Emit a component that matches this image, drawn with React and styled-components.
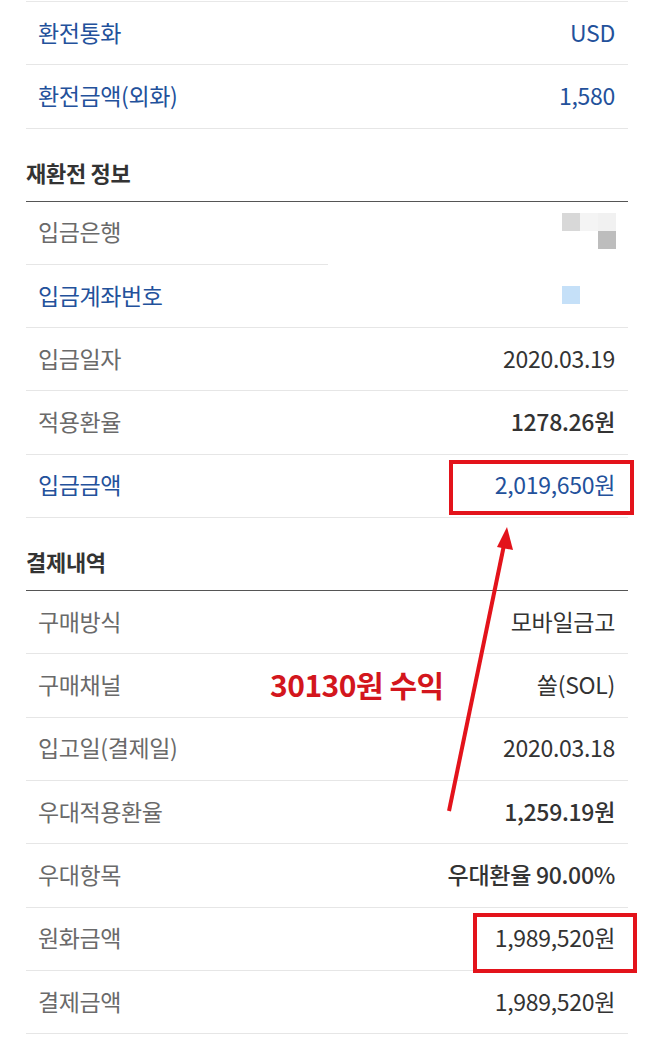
import styled, { createGlobalStyle } from 'styled-components'

const Global = createGlobalStyle`
  body {
    margin: 0;
    background: #fff;
    font-family: "Noto Sans CJK KR", "Noto Sans", sans-serif;
  }
`

const Page = styled.div`
  position: relative;
  width: 652px;
  height: 1045px;
  padding: 1px 24px 0 26px;
  box-sizing: border-box;
  overflow: hidden;
`

const List = styled.div`
  display: flex;
  flex-direction: column;
  border-top: ${p => (p.$top ? '1px solid #e8e8e8' : 'none')};
`

const Title = styled.h3`
  margin: 0;
  padding: 28px 0 14px;
  font-size: 22px;
  line-height: 30px;
  font-weight: 700;
  color: #333;
  border-bottom: 1.5px solid #555;
  letter-spacing: -0.3px;
`

const Row = styled.div`
  position: relative;
  height: 63.3px;
  box-sizing: border-box;
  display: flex;
  align-items: center;
  justify-content: space-between;
  padding: 0 13px 4px 12px;
  &::after {
    content: '';
    position: absolute;
    left: 0;
    bottom: 0;
    height: 1px;
    width: ${p => (p.$short ? '302px' : '100%')};
    background: #e6e6e6;
  }
`

const Label = styled.span`
  font-size: 23px;
  line-height: 30px;
  color: ${p => (p.$blue ? '#23519b' : '#6a6a6a')};
  letter-spacing: -0.4px;
`

const Value = styled.span`
  font-size: 23px;
  line-height: 30px;
  color: ${p => (p.$blue ? '#23519b' : '#333')};
  font-weight: ${p => (p.$bold ? 500 : 400)};
  letter-spacing: -0.3px;
`

const Mosaic = styled.div`
  display: grid;
  grid-template-columns: repeat(3, 18px);
  grid-auto-rows: 18px;
  margin-right: -1px;
`

const Cell = styled.div`
  background: ${p => p.$c || 'transparent'};
`

const Annotation = styled.div`
  position: absolute;
  left: ${p => p.$x}px;
  top: ${p => p.$y}px;
  width: ${p => p.$w}px;
  height: ${p => p.$h}px;
  box-sizing: border-box;
  border: 4px solid #e3131b;
  pointer-events: none;
`

const Note = styled.span`
  position: absolute;
  left: 270px;
  top: 664px;
  font-size: 30px;
  line-height: 40px;
  font-weight: 700;
  color: #d3161d;
  letter-spacing: -0.5px;
`

const Arrow = styled.svg`
  position: absolute;
  left: 0;
  top: 0;
  pointer-events: none;
`

const rows1 = [
  { label: '환전통화', value: 'USD', blue: true, valueBlue: true },
  { label: '환전금액(외화)', value: '1,580', blue: true, valueBlue: true },
]

const rows3 = [
  { label: '구매방식', value: '모바일금고' },
  { label: '구매채널', value: '쏠(SOL)' },
  { label: '입고일(결제일)', value: '2020.03.18' },
  { label: '우대적용환율', value: '1,259.19원', bold: true },
  { label: '우대항목', value: '우대환율 90.00%', bold: true },
  { label: '원화금액', value: '1,989,520원' },
  { label: '결제금액', value: '1,989,520원' },
]

function InfoRow(props) {
  return (
    <Row $short={props.short}>
      <Label $blue={props.blue}>{props.label}</Label>
      {props.children || (
        <Value $blue={props.valueBlue} $bold={props.bold}>{props.value}</Value>
      )}
    </Row>
  )
}

export default function App() {
  return (
    <>
      <Global />
      <Page>
        <List $top>
          {rows1.map(r => <InfoRow key={r.label} {...r} />)}
        </List>

        <Title>재환전 정보</Title>
        <List>
          <InfoRow label="입금은행" short>
            <Mosaic>
              <Cell $c="#d8d8d8" />
              <Cell $c="#f4f4f4" />
              <Cell $c="#f1f1f1" />
              <Cell />
              <Cell />
              <Cell $c="#bdbdbd" />
            </Mosaic>
          </InfoRow>
          <InfoRow label="입금계좌번호" blue>
            <Mosaic>
              <Cell $c="#c5e0f8" />
              <Cell />
              <Cell />
            </Mosaic>
          </InfoRow>
          <InfoRow label="입금일자" value="2020.03.19" />
          <InfoRow label="적용환율" value="1278.26원" bold />
          <InfoRow label="입금금액" value="2,019,650원" blue valueBlue />
        </List>

        <Title>결제내역</Title>
        <List>
          {rows3.map(r => <InfoRow key={r.label} {...r} />)}
        </List>

        <Annotation $x={449} $y={460} $w={185} $h={55} />
        <Annotation $x={473} $y={913} $w={164} $h={60} />
        <Note>30130원 수익</Note>
        <Arrow width="652" height="1045" viewBox="0 0 652 1045">
          <line x1="449" y1="811" x2="504" y2="545" stroke="#e3131b" strokeWidth="4" />
          <polygon points="507,527 497,547 513,550" fill="#e3131b" />
        </Arrow>
      </Page>
    </>
  )
}
